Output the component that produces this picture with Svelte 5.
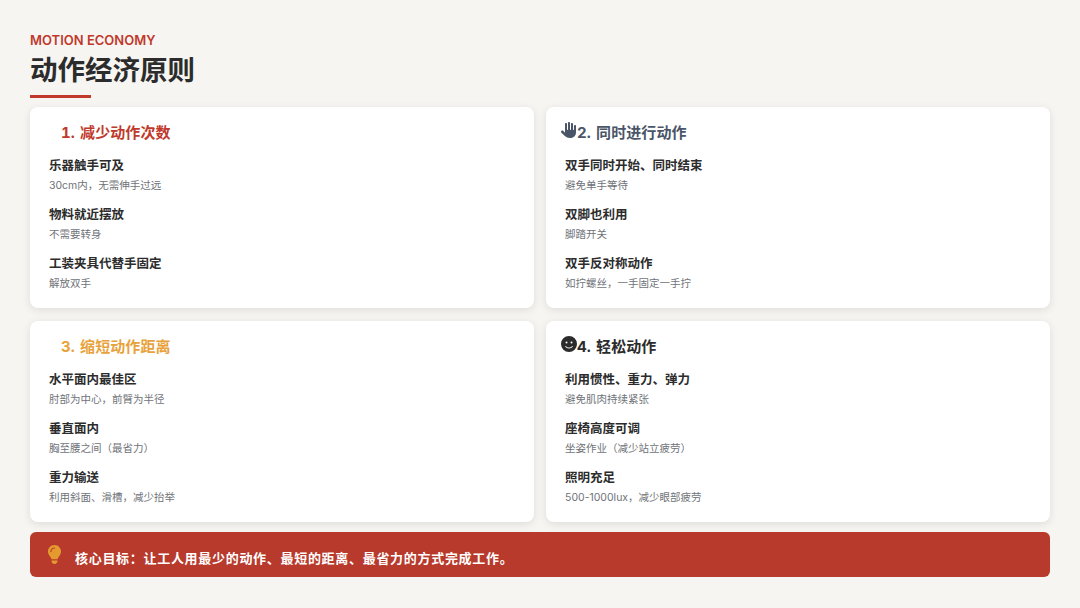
<script>
  const cards = [
    { cls: 'red', title: '1. 减少动作次数', icon: 'none', items: [['乐器触手可及','30cm内，无需伸手过远'],['物料就近摆放','不需要转身'],['工装夹具代替手固定','解放双手']] },
    { cls: 'slate', title: '2. 同时进行动作', icon: 'hand', items: [['双手同时开始、同时结束','避免单手等待'],['双脚也利用','脚踏开关'],['双手反对称动作','如拧螺丝，一手固定一手拧']] },
    { cls: 'orange', title: '3. 缩短动作距离', icon: 'none', items: [['水平面内最佳区','肘部为中心，前臂为半径'],['垂直面内','胸至腰之间（最省力）'],['重力输送','利用斜面、滑槽，减少抬举']] },
    { cls: 'dark', title: '4. 轻松动作', icon: 'smile', items: [['利用惯性、重力、弹力','避免肌肉持续紧张'],['座椅高度可调','坐姿作业（减少站立疲劳）'],['照明充足','500-1000lux，减少眼部疲劳']] }
  ];
</script>

<div class="page">
  <header>
    <div class="eyebrow">MOTION ECONOMY</div>
    <h1>动作经济原则</h1>
    <div class="rule"></div>
  </header>
  <main class="grid">
    {#each cards as c}
      <section class="card">
        <h2 class={c.cls}>
          <span class="ico">
            {#if c.icon === 'hand'}
              <svg viewBox="0 0 512 512" width="16" height="16"><path fill="#4a5568" d="M288 32c0-17.700-14.300-32-32-32s-32 14.300-32 32V240c0 8.800-7.200 16-16 16s-16-7.200-16-16V64c0-17.700-14.300-32-32-32s-32 14.300-32 32V336c0 1.500 0 3.100 .1 4.600L67.600 283c-16-15.200-41.300-14.600-56.600 1.400s-14.600 41.300 1.400 56.600L124.800 448c43.100 41.100 100.400 64 160 64H304c97.200 0 176-78.800 176-176V128c0-17.700-14.300-32-32-32s-32 14.300-32 32V240c0 8.800-7.200 16-16 16s-16-7.200-16-16V64c0-17.700-14.300-32-32-32s-32 14.300-32 32V240c0 8.800-7.200 16-16 16s-16-7.200-16-16V32z"/></svg>
            {:else if c.icon === 'smile'}
              <svg viewBox="0 0 512 512" width="16" height="16"><path fill="#2c2c2c" d="M256 512A256 256 0 1 0 256 0a256 256 0 1 0 0 512zM164.100 325.500C182 346.200 212.600 368 256 368s74-21.800 91.900-42.500c5.800-6.700 15.900-7.400 22.600-1.600s7.400 15.900 1.600 22.600C349.800 372.100 311.100 400 256 400s-93.800-27.900-116.100-53.500c-5.800-6.700-5.100-16.800 1.600-22.600s16.800-5.100 22.600 1.600zM144.400 208a32 32 0 1 1 64 0 32 32 0 1 1 -64 0zm192-32a32 32 0 1 1 0 64 32 32 0 1 1 0-64z"/></svg>
            {/if}
          </span>{c.title}
        </h2>
        <div class="items">
          {#each c.items as it}
            <div class="item">
              <div class="name">{it[0]}</div>
              <div class="desc">{it[1]}</div>
            </div>
          {/each}
        </div>
      </section>
    {/each}
  </main>
  <footer class="banner">
    <svg class="bulb" viewBox="0 0 384 512" width="15" height="19"><path fill="#e59a2f" d="M272 384c9.600-31.900 29.500-59.100 49.200-86.200c5.200-7.100 10.400-14.200 15.400-21.400c19.800-28.500 31.400-63 31.400-100.300C368 78.800 289.200 0 192 0S16 78.800 16 176c0 37.300 11.600 71.900 31.400 100.300c5 7.200 10.200 14.300 15.400 21.400c19.800 27.100 39.700 54.400 49.200 86.300H272zM192 512c44.200 0 80-35.800 80-80V416H112v16c0 44.200 35.800 80 80 80zM112 176c0 8.800-7.200 16-16 16s-16-7.200-16-16c0-61.900 50.100-112 112-112c8.800 0 16 7.200 16 16s-7.200 16-16 16c-44.200 0-80 35.800-80 80z"/></svg>
    <span class="goal">核心目标：让工人用最少的动作、最短的距离、最省力的方式完成工作。</span>
  </footer>
</div>

<style>
  :global(body) { margin: 0; background: #f6f5f2; }
  .page {
    width: 1080px; height: 608px; box-sizing: border-box;
    padding: 32px 30px 31px;
    font-family: Inter, "Noto Sans CJK SC", sans-serif;
    display: flex; flex-direction: column;
    overflow: hidden;
  }
  .eyebrow { font-size: 13px; line-height: 16px; font-weight: 600; color: #c0392b; }
  h1 { margin: 3px 0 0; font-size: 27.500px; line-height: 38px; font-weight: 700; color: #2c2c2c; }
  .rule { width: 61px; height: 3px; background: #c0392b; margin-top: 6px; }
  .grid {
    display: grid; grid-template-columns: 504px 504px; gap: 13px 12px;
    margin-top: 9px;
  }
  .card {
    background: #fff; border-radius: 8px; height: 201px; box-sizing: border-box;
    padding: 16px 19px; box-shadow: 0 2px 8px rgba(0,0,0,.1);
  }
  h2 {
    margin: 0 0 0 -3px; display: flex; align-items: center;
    font-size: 15px; line-height: 20px; font-weight: 700;
    letter-spacing: 0.1px; word-spacing: 1px; font-variant-numeric: tabular-nums;
  }
  .ico { width: 16px; height: 20px; margin-left: -1px; display: block; }
  .ico svg { display: block; margin-top: -1px; }
  .red { color: #c0392b; }
  .slate { color: #4a5568; }
  .orange { color: #e9a23b; }
  .dark { color: #2c2c2c; }
  .items { margin-top: 14px; display: flex; flex-direction: column; gap: 13px; }
  .name { font-size: 12.500px; line-height: 18px; font-weight: 700; color: #2c2c2c; }
  .desc { font-size: 10.500px; line-height: 14px; margin-top: 4px; color: #6f7378; }
  .banner {
    margin-top: 10px; height: 45px; flex: none; border-radius: 6px; background: #b83a2c;
    display: flex; align-items: center; padding-left: 17px; box-sizing: border-box;
    color: #fff; font-size: 13px; font-weight: 700; letter-spacing: 0.7px;
  }
  .goal { margin-top: 6px; }
  .bulb { margin-right: 13px; margin-top: -1px; flex: none; }
</style>
